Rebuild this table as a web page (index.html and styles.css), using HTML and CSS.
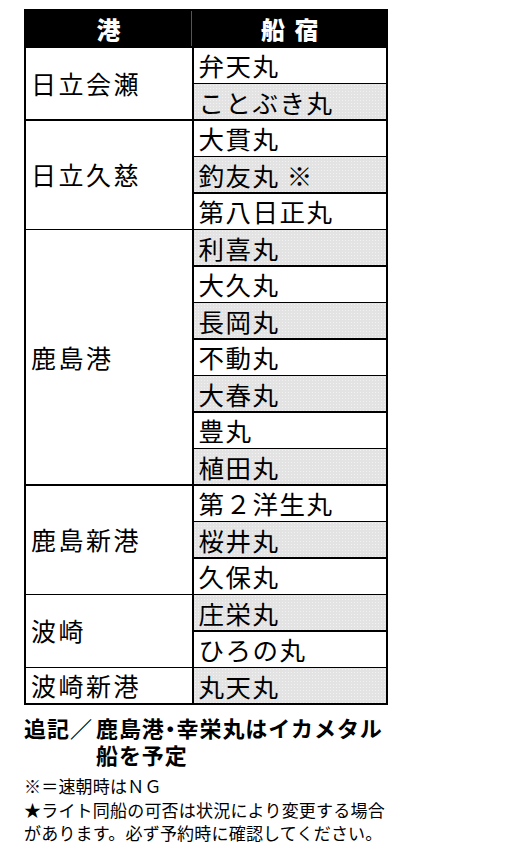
FILE: index.html
```html
<!DOCTYPE html>
<html lang="ja">
<head>
<meta charset="utf-8">
<link rel="stylesheet" href="styles.css">
</head>
<body>
<div class="page">
  <div class="tbl">
    <div class="hd">港</div>
    <div class="hd hd-ship">船 宿</div>

    <div class="port r2">日立会瀬</div>
    <div class="ship">弁天丸</div>
    <div class="ship g">ことぶき丸</div>

    <div class="port r3">日立久慈</div>
    <div class="ship">大貫丸</div>
    <div class="ship g">釣友丸 ※</div>
    <div class="ship">第八日正丸</div>

    <div class="port r7">鹿島港</div>
    <div class="ship g">利喜丸</div>
    <div class="ship">大久丸</div>
    <div class="ship g">長岡丸</div>
    <div class="ship">不動丸</div>
    <div class="ship g">大春丸</div>
    <div class="ship">豊丸</div>
    <div class="ship g">植田丸</div>

    <div class="port r3">鹿島新港</div>
    <div class="ship">第２洋生丸</div>
    <div class="ship g">桜井丸</div>
    <div class="ship">久保丸</div>

    <div class="port r2">波崎</div>
    <div class="ship g">庄栄丸</div>
    <div class="ship">ひろの丸</div>

    <div class="port r1">波崎新港</div>
    <div class="ship g">丸天丸</div>
  </div>

  <div class="note">
    <span class="note-head">追記／</span>
    <span class="note-body">鹿島港・幸栄丸はイカメタル船を予定</span>
  </div>
  <div class="small">
    <p>※＝速朝時はＮＧ</p>
    <p>★ライト同船の可否は状況により変更する場合があります。必ず予約時に確認してください。</p>
  </div>
</div>
</body>
</html>
```

FILE: styles.css
```css
html, body {
  margin: 0;
  padding: 0;
  background: #fff;
}

body {
  font-family: "Noto Sans CJK JP", "Noto Sans", sans-serif;
  color: #000;
}

.page {
  padding: 9px 0 0 24px;
  width: 366px;
}

.tbl {
  display: grid;
  grid-template-columns: 166px 1fr;
  grid-template-rows: 35px repeat(18, 1fr);
  height: 696px;
  width: 364px;
  box-sizing: border-box;
  border: 2px solid #000;
  background: #000;
  gap: 1.5px;
}

.hd {
  background: #000;
  color: #fff;
  font-weight: 900;
  font-size: 24px;
  display: flex;
  align-items: center;
  justify-content: center;
  line-height: 1;
  border-right: 1px solid #555;
}

.hd-ship {
  word-spacing: 4px;
  border-right: 0;
}

.port {
  background: #fff;
  display: flex;
  align-items: center;
  padding-left: 5px;
  font-size: 25px;
  letter-spacing: 2.5px;
  line-height: 1;
}

.r1 { grid-row: span 1; }
.r2 { grid-row: span 2; }
.r3 { grid-row: span 3; }
.r7 { grid-row: span 7; }

.ship {
  background: #fff;
  display: flex;
  align-items: center;
  padding-left: 5px;
  font-size: 25.5px;
  letter-spacing: 1.5px;
  line-height: 1;
  white-space: nowrap;
}

.ship.g {
  background-color: #e3e3e3;
  background-image: radial-gradient(rgba(255,255,255,0.55) 0.6px, transparent 0.8px);
  background-size: 3px 3px;
}

.note {
  margin-top: 9px;
  font-weight: 700;
  font-size: 22px;
  line-height: 27px;
  display: flex;
}

.note-head {
  flex: none;
  width: 72px;
  letter-spacing: 1px;
  white-space: nowrap;
}

.note-body {
  width: 292px;
  letter-spacing: 0.9px;
  font-feature-settings: "halt" 1;
}

.small {
  margin-top: 6px;
  font-size: 17px;
  line-height: 23.5px;
}

.small p {
  margin: 0;
  width: 366px;
  letter-spacing: 0.2px;
}
```
